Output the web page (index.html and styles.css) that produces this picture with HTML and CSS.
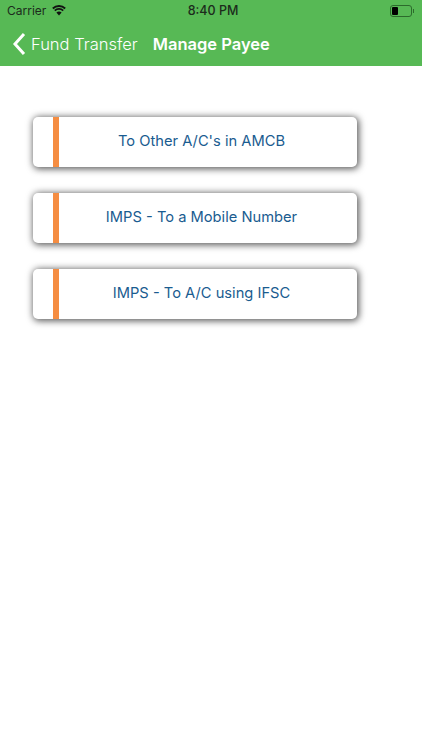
FILE: index.html
```html
<!DOCTYPE html>
<html lang="en">
<head>
    <meta charset="UTF-8">
    <meta name="viewport" content="width=device-width, initial-scale=1.0">
    <title>Manage Payee</title>
    <link rel="stylesheet" href="styles.css">
</head>
<body>
    <header class="top">
        <div class="status">
            <div class="status-left">
                <span>Carrier</span>
                <svg class="wifi" width="14" height="11" viewBox="0 0 14 11">
                    <path d="M7 10.5 L4.4 7.6 A3.8 3.8 0 0 1 9.6 7.6 Z" fill="#111"/>
                    <path d="M2.8 5.6 A6 6 0 0 1 11.2 5.6" fill="none" stroke="#111" stroke-width="1.8"/>
                    <path d="M0.8 3.5 A8.9 8.9 0 0 1 13.2 3.5" fill="none" stroke="#111" stroke-width="1.8"/>
                </svg>
            </div>
            <div class="status-time">8:40 PM</div>
            <div class="status-right">
                <div class="battery"><div class="battery-level"></div></div>
                <div class="battery-tip"></div>
            </div>
        </div>
        <nav class="nav">
            <a class="back" href="#">
                <svg width="14" height="24" viewBox="0 0 14 24">
                    <path d="M12 2 L3 12 L12 22" fill="none" stroke="#fff" stroke-width="3"/>
                </svg>
                <span>Fund Transfer</span>
            </a>
            <h1 class="title">Manage Payee</h1>
        </nav>
    </header>
    <main class="content">
        <a class="option" href="#"><span class="mark"></span><span class="label">To Other A/C's in AMCB</span></a>
        <a class="option" href="#"><span class="mark"></span><span class="label">IMPS - To a Mobile Number</span></a>
        <a class="option" href="#"><span class="mark"></span><span class="label">IMPS - To A/C using IFSC</span></a>
    </main>
</body>
</html>
```

FILE: styles.css
```css
body {
    font-family: Inter, "Liberation Sans", sans-serif;
    margin: 0;
    padding: 0;
    background-color: #fff;
}

.top {
    background-color: #57b955;
    height: 66px;
}

.status {
    display: flex;
    align-items: center;
    justify-content: space-between;
    height: 21px;
    padding: 0 8px 0 7px;
    font-size: 12px;
    color: #1c2b1c;
}

.status-left {
    display: flex;
    align-items: center;
    gap: 6px;
    width: 150px;
}

.status-time {
    font-weight: 500;
    font-size: 12.5px;
    margin-left: 5px;
}

.status-right {
    display: flex;
    align-items: center;
    justify-content: flex-end;
    width: 150px;
}

.battery {
    width: 18px;
    height: 8px;
    padding: 1px;
    border: 1px solid #2c6b2c;
    border-radius: 3px;
}

.battery-level {
    width: 6px;
    height: 100%;
    background-color: #000;
    border-radius: 1px;
}

.battery-tip {
    width: 1px;
    height: 4px;
    margin-left: 1px;
    background-color: #2c6b2c;
}

.nav {
    display: flex;
    align-items: center;
    height: 45px;
    padding-left: 12px;
    color: #fff;
}

.back {
    display: flex;
    align-items: center;
    gap: 5px;
    color: #fff;
    text-decoration: none;
    font-size: 16.5px;
    font-weight: 300;
}

.title {
    margin: 0 0 0 15px;
    font-size: 16.5px;
    font-weight: 600;
}

.content {
    display: flex;
    flex-direction: column;
    gap: 26px;
    width: 324px;
    height: 633px;
    padding: 51px 0 0 33px;
}

.option {
    display: flex;
    align-items: stretch;
    height: 50px;
    padding-left: 20px;
    background-color: #fff;
    border-radius: 5px;
    box-shadow: 1px 1px 7px 1px rgba(0, 0, 0, 0.65);
    text-decoration: none;
}

.mark {
    width: 6px;
    background-color: #f58d42;
}

.label {
    flex: 1;
    align-self: center;
    padding: 0 13px 2px 0;
    text-align: center;
    font-size: 14.7px;
    color: #1a5c90;
}
```
